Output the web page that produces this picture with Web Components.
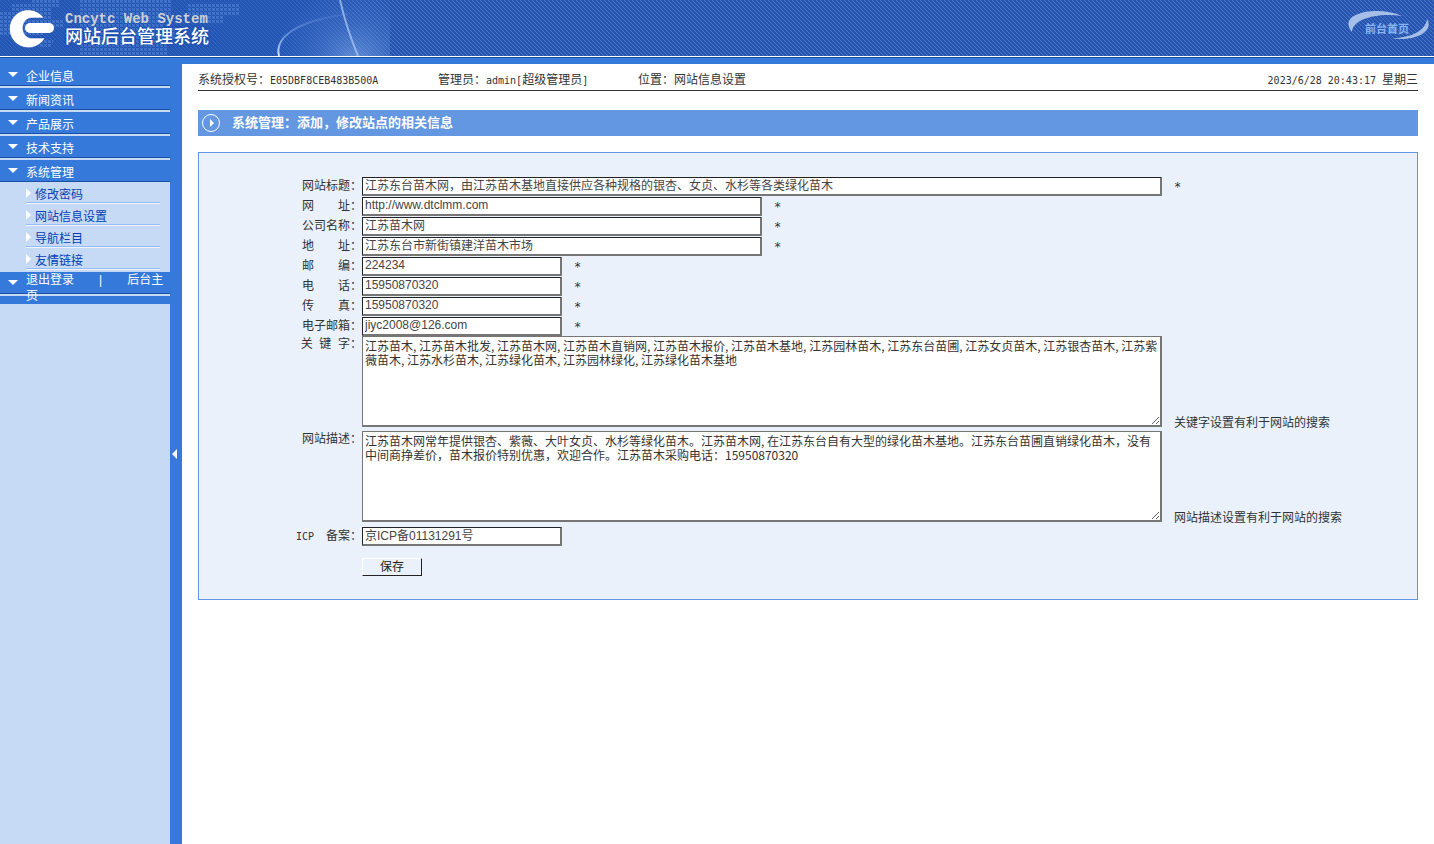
<!DOCTYPE html>
<html lang="zh-CN">
<head>
<meta charset="utf-8">
<title>网站后台管理系统</title>
<style>
  html, body { margin: 0; min-height: 100%; }
  body { background: #fff; color: #333; font: 12px/16px "Liberation Sans", "Noto Sans CJK SC", sans-serif; }
</style>
</head>
<body>
<admin-app></admin-app>

<template id="t-app">
  <style>
    :host { display: flex; flex-direction: column; min-height: 100vh; }
    .body { display: flex; flex: 1; }
    main { flex: 1; min-width: 0; padding: 0 16px; }
  </style>
  <site-header></site-header>
  <div class="body">
    <side-nav>
      <nav-group label="企业信息"></nav-group>
      <nav-group label="新闻资讯"></nav-group>
      <nav-group label="产品展示"></nav-group>
      <nav-group label="技术支持"></nav-group>
      <nav-group label="系统管理" open>
        <nav-item>修改密码</nav-item>
        <nav-item>网站信息设置</nav-item>
        <nav-item>导航栏目</nav-item>
        <nav-item>友情链接</nav-item>
      </nav-group>
      <nav-exit></nav-exit>
    </side-nav>
    <nav-toggle></nav-toggle>
    <main>
      <status-bar></status-bar>
      <page-title>系统管理：添加，修改站点的相关信息</page-title>
      <site-form></site-form>
    </main>
  </div>
</template>

<template id="t-header">
  <style>
    :host { display: block; background: #357ada; height: 64px; }
    .bar { position: relative; display: flex; justify-content: space-between; height: 56px; overflow: hidden;
      background: #2654b0; border-bottom: 1px solid #fff; }
    .edge { height: 1px; background: #1d4f9c; }
    .art { position: absolute; top: 0; left: 0; width: 100%; height: 56px; }
    .brand { position: relative; display: flex; gap: 8px; padding: 8px 0 0 8px; }
    .brand svg { display: block; margin-right: 2px; }
    .en { margin: 5px 0 0; font: bold 14px/12px "Liberation Mono", monospace; font-size: 14px; color: #cfd0d4; white-space: nowrap; }
    h1 { margin: 0; font: 500 18px/20px "Noto Sans CJK SC", sans-serif; color: #fff; white-space: nowrap; text-shadow: 0 0 3px #0c3ca0; }
    .home { position: relative; display: grid; place-items: center; width: 82px; height: 30px; margin: 11px 4px 0 0;
      text-decoration: none; color: #86b5f3; font: bold 11px/16px "Noto Sans CJK SC", sans-serif; }
    .home svg { position: absolute; inset: 0; }
    .home span { position: relative; padding-top: 3px; margin-right: 4px; }
  </style>
  <div class="bar">
    <svg class="art" aria-hidden="true">
      <defs>
        <pattern id="hatch" width="4" height="4" patternUnits="userSpaceOnUse" shape-rendering="crispEdges">
          <path d="M0 0h1v1H0zM1 1h1v1H1zM2 2h1v1H2zM3 3h1v1H3z" fill="#4a78c4"/>
        </pattern>
        <pattern id="dots" width="4" height="4" patternUnits="userSpaceOnUse"><rect width="3" height="3" fill="#6c9be8" fill-opacity=".32"/></pattern>
        <radialGradient id="glow" cx="355" cy="62" r="80" gradientUnits="userSpaceOnUse">
          <stop offset="0" stop-color="#8db4ee" stop-opacity=".6"/><stop offset=".5" stop-color="#5f92e0" stop-opacity=".25"/><stop offset="1" stop-color="#3f7bdb" stop-opacity="0"/>
        </radialGradient>
        <linearGradient id="shade"><stop offset="0" stop-color="#1e55ba" stop-opacity=".45"/><stop offset=".7" stop-color="#1e55ba" stop-opacity=".45"/><stop offset="1" stop-color="#1e55ba" stop-opacity="0"/></linearGradient>
        <linearGradient id="arc" x1="0" x2="0" y1="1" y2="0"><stop offset="0" stop-color="#dce9ff"/><stop offset=".5" stop-color="#86aeea" stop-opacity=".6"/><stop offset="1" stop-color="#86aeea" stop-opacity=".1"/></linearGradient>
      </defs>
      <rect width="100%" height="56" fill="url(#hatch)"/>
      <rect width="390" height="56" fill="url(#shade)"/>
      <path d="M0 12h12V4h20V0h28v8h-8v12h12v8H44v8H24v-8H12v8H0zM80 0h92v16h-8v12h16v12h-12v16H80V44H68V28h12zM188 4h52v12h-16v8h-28v-8h-8z" fill="url(#dots)"/>
      <path d="M38 40h16l-4 8h-12z" fill="url(#dots)"/>
      <rect x="260" width="130" height="56" fill="url(#glow)"/>
      <path d="M279 56c-5-20 21-36 69-42" fill="none" stroke="url(#arc)" stroke-width="2"/>
      <path d="M340 0c5 22 11 39 18 56" fill="none" stroke="#a9c5f2" stroke-opacity=".75" stroke-width="2"/>
    </svg>
    <div class="brand">
      <svg width="47" height="40" viewBox="0 0 47 40" aria-hidden="true">
        <path d="M36 10A19 19 0 1 0 37 30H24c-12 0-12-20 0-20z" fill="#fff" stroke="#0c3ca0" stroke-opacity=".5"/>
        <rect x="17" y="15" width="29" height="10" rx="5" fill="#fff"/>
      </svg>
      <div><p class="en">Cncytc Web System</p><h1>网站后台管理系统</h1></div>
    </div>
    <a class="home" href="#">
      <svg width="82" height="30" viewBox="0 0 82 30" aria-hidden="true">
        <path d="M4 21C-12 2 30-6 54 5 30 1 4 8 4 21z" fill="#a6bfe8"/>
        <path d="M79 8c8 13-14 23-35 19 20 0 34-8 35-19z" fill="#a6bfe8"/>
      </svg>
      <span>前台首页</span>
    </a>
  </div>
  <div class="edge"></div>
</template>

<template id="t-side">
  <style>:host { display: block; width: 170px; flex: none; background: #c6daf5; } :host([hidden]) { display: none; }</style>
  <nav><slot></slot></nav>
</template>

<template id="t-group">
  <style>
    :host { display: block; }
    button { display: flex; align-items: center; gap: 8px; box-sizing: border-box; width: 100%; height: 22px; margin: 0 0 2px; padding: 4px 0 0 8px;
      border: 0; border-bottom: 1px solid #1d4fa5; background: #357ada; color: #fff; font: inherit; text-align: left; }
    i { border: 5px solid transparent; border-top-color: #fff; border-bottom: 0; margin: -4px 0 0; width: 0; }
    .sub { display: none; padding-bottom: 2px; }
    :host([open]) .sub { display: block; }
    :host([open]) button { margin: 0; }
  </style>
  <button type="button"><i></i><span></span></button>
  <div class="sub"><slot></slot></div>
</template>

<template id="t-item">
  <style>
    :host { display: block; margin: 0 10px 1px 26px; height: 20px; border-bottom: 1px solid #94bbf5; box-shadow: 0 1px #eef5ff; }
    a { display: flex; align-items: center; gap: 4px; padding-top: 5px; color: #0440b4; text-decoration: none; }
    i { border: 5px solid transparent; border-left-color: #fff; border-right: 0; margin-top: -4px; }
  </style>
  <a href="#"><i></i><slot></slot></a>
</template>

<template id="t-exit">
  <style>
    :host { display: block; background: #357ada; height: 32px; }
    .row { display: flex; gap: 8px; box-sizing: border-box; height: 22px; padding-left: 8px; border-bottom: 1px solid #1d4fa5; box-shadow: 0 2px #c6daf5; color: #fff; }
    i { flex: none; border: 5px solid transparent; border-top-color: #fff; border-bottom: 0; margin-top: 8px; height: 0; width: 0; }
    p { margin: 0; position: relative; }
    a { color: inherit; text-decoration: none; }
    .sep { margin: 0 25px; }
  </style>
  <div class="row"><i></i><p><a href="#">退出登录</a><span class="sep">|</span><a href="#">后台主页</a></p></div>
</template>

<template id="t-toggle">
  <style>
    :host { display: flex; flex: none; width: 12px; background: #357ada; }
    button { flex: 1; display: flex; align-items: center; padding: 0 2px; border: 0; background: none; }
    i { border: 5px solid transparent; border-right-color: #fff; border-left: 0; }
  </style>
  <button type="button" aria-label="收起菜单"><i></i></button>
</template>

<template id="t-status">
  <style>
    :host { display: flex; height: 26px; align-items: center; border-bottom: 1px solid #333; line-height: 18px; white-space: nowrap; }
    :host > span, span.a, span.b, span { padding-top: 5px; }
    .a { width: 240px; } .b { width: 200px; } .d { margin-left: auto; }
    code { font: 10px/16px "DejaVu Sans Mono", monospace; }
  </style>
  <span class="a">系统授权号：<code>E05DBF8CEB483B500A</code></span>
  <span class="b">管理员：<code>admin[</code>超级管理员<code>]</code></span>
  <span>位置：网站信息设置</span>
  <span class="d"><code>2023/6/28 20:43:17 </code>星期三</span>
</template>

<template id="t-title">
  <style>
    :host { display: flex; align-items: center; gap: 12px; height: 26px; margin-top: 19px; padding-left: 4px; background: #6397e1; color: #fff; }
    h2 { margin: 0; padding-bottom: 2px; font: bold 13px/16px "Noto Sans CJK SC", sans-serif; }
    svg { flex: none; }
  </style>
  <svg width="18" height="18" viewBox="0 0 18 18" aria-hidden="true"><circle cx="9" cy="9" r="8.500" fill="none" stroke="#fff"/><path d="M8 5l4 4-4 4z" fill="#fff"/></svg>
  <h2><slot></slot></h2>
</template>

<template id="t-form">
  <style>
    :host { display: block; margin-top: 16px; padding: 23px 0; border: 1px solid #6397e1; background: #eaf1fa; }
    form { margin: 0; }
    .actions { padding: 12px 0 0 163px; }
    button { display: block; width: 60px; height: 18px; padding: 0; border: 1px solid; border-color: #fff #222 #222 #fff; background: #eaf1fa; color: #222; font: inherit; }
  </style>
  <form>
    <form-row label="网站标题：" size="800" hint="*" value="江苏东台苗木网，由江苏苗木基地直接供应各种规格的银杏、女贞、水杉等各类绿化苗木"></form-row>
    <form-row label="网　　址：" size="400" hint="*" value="http://www.dtclmm.com"></form-row>
    <form-row label="公司名称：" size="400" hint="*" value="江苏苗木网"></form-row>
    <form-row label="地　　址：" size="400" hint="*" value="江苏东台市新街镇建洋苗木市场"></form-row>
    <form-row label="邮　　编：" size="200" hint="*" value="224234"></form-row>
    <form-row label="电　　话：" size="200" hint="*" value="15950870320"></form-row>
    <form-row label="传　　真：" size="200" hint="*" value="15950870320"></form-row>
    <form-row label="电子邮箱：" size="200" hint="*" value="jiyc2008@126.com"></form-row>
    <form-row area label="关&nbsp;&nbsp;键&nbsp;&nbsp;字：" size="800" hint="关键字设置有利于网站的搜索" value="江苏苗木, 江苏苗木批发, 江苏苗木网, 江苏苗木直销网, 江苏苗木报价, 江苏苗木基地, 江苏园林苗木, 江苏东台苗圃, 江苏女贞苗木, 江苏银杏苗木, 江苏紫薇苗木, 江苏水杉苗木, 江苏绿化苗木, 江苏园林绿化, 江苏绿化苗木基地"></form-row>
    <form-row area label="网站描述：" size="800" hint="网站描述设置有利于网站的搜索" value="江苏苗木网常年提供银杏、紫薇、大叶女贞、水杉等绿化苗木。江苏苗木网, 在江苏东台自有大型的绿化苗木基地。江苏东台苗圃直销绿化苗木，没有中间商挣差价，苗木报价特别优惠，欢迎合作。江苏苗木采购电话：15950870320"></form-row>
    <form-row latin="ICP" label="　备案：" size="200" value="京ICP备01131291号"></form-row>
    <div class="actions"><button type="button">保存</button></div>
  </form>
</template>

<template id="t-row">
  <style>
    :host { display: grid; grid-template-columns: 163px auto 1fr; align-items: center; min-height: 20px; }
    label { text-align: right; white-space: nowrap; }
    code { font: 10px/16px "DejaVu Sans Mono", monospace; }
    .control { display: block; }
    input, textarea { display: block; box-sizing: border-box; margin: 0; border: solid #767676; border-width: 1px 2px 2px 1px; background: #fff; color: #333; }
    input { height: 19px; padding: 0 2px 2px; border-top-color: #222; border-left-color: #222; font: 12px/14px "Liberation Sans", "Noto Sans CJK SC", sans-serif; color: #444; }
    textarea { height: 91px; padding: 2px; font: 12px/14px "Noto Sans CJK SC", sans-serif; resize: both; overflow: auto; }
    .hint { padding-left: 12px; white-space: nowrap; }
    :host([hint="*"]) .hint { font: 12px/16px "DejaVu Sans Mono", monospace; padding-top: 2px; }
    :host([area]) { align-items: start; }
    :host([area]) textarea { margin-bottom: 4px; }
    :host([area]) .hint { align-self: end; }
  </style>
  <label for="field"></label>
  <span class="control"></span>
  <span class="hint"></span>
</template>

<script>
  const make = (tag, id, init) => customElements.define(tag, class extends HTMLElement {
    constructor() {
      super();
      this.attachShadow({ mode: 'open' }).append(document.getElementById(id).content.cloneNode(true));
    }
    connectedCallback() { if (init) init(this, this.shadowRoot); }
  });

  make('nav-item', 't-item');
  make('nav-group', 't-group', (host, root) => {
    root.querySelector('span').textContent = host.getAttribute('label');
    root.querySelector('button').onclick = () => host.toggleAttribute('open');
  });
  make('nav-exit', 't-exit');
  make('side-nav', 't-side');
  make('nav-toggle', 't-toggle', (host, root) => {
    root.querySelector('button').onclick = () => { const nav = host.previousElementSibling; nav.hidden = !nav.hidden; };
  });
  make('site-header', 't-header');
  make('status-bar', 't-status');
  make('page-title', 't-title');
  make('form-row', 't-row', (host, root) => {
    const label = root.querySelector('label');
    if (host.hasAttribute('latin')) {
      const code = document.createElement('code');
      code.textContent = host.getAttribute('latin');
      label.append(code);
    }
    label.append(host.getAttribute('label'));
    const field = document.createElement(host.hasAttribute('area') ? 'textarea' : 'input');
    field.id = 'field';
    field.spellcheck = false;
    field.value = host.getAttribute('value');
    field.style.width = host.getAttribute('size') + 'px';
    root.querySelector('.control').append(field);
    root.querySelector('.hint').textContent = host.getAttribute('hint') || '';
  });
  make('site-form', 't-form');
  make('admin-app', 't-app');
</script>
</body>
</html>
